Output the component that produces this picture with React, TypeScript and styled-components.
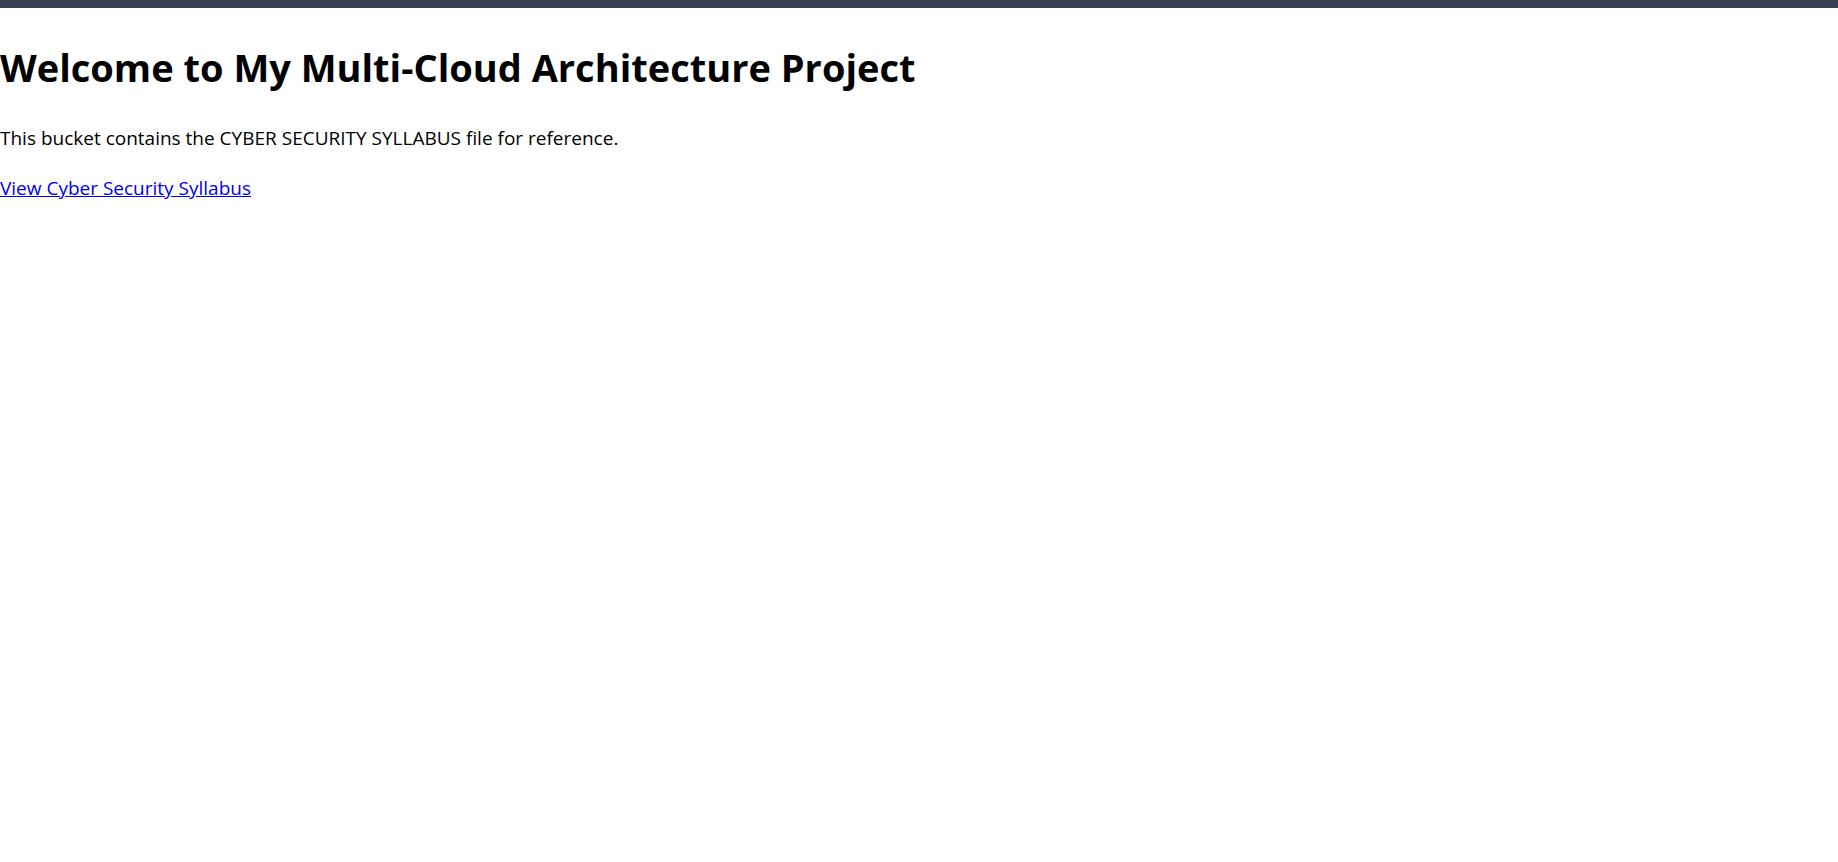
import styled, { createGlobalStyle } from 'styled-components';

const GlobalStyle = createGlobalStyle`
  html, body {
    margin: 0;
    padding: 0;
    background: #ffffff;
  }
  body {
    font-family: 'Open Sans', 'Noto Sans', sans-serif;
    color: #000000;
  }
`;

const TopBar = styled.div`
  height: 8px;
  background-color: #374151;
`;

const Main = styled.main`
  display: flex;
  flex-direction: column;
  align-items: flex-start;
  padding-top: 36px;
`;

const Title = styled.h1`
  margin: 0 0 36px;
  font-size: 38px;
  line-height: 46px;
  font-weight: 700;
`;

const Text = styled.p`
  margin: 0 0 25px;
  font-size: 19px;
  line-height: 25px;
`;

const Link = styled.a`
  font-size: 19px;
  line-height: 25px;
  color: #0000ee;
  text-decoration: underline;
`;

const App: React.FC = () => {
  return (
    <>
      <GlobalStyle />
      <TopBar />
      <Main>
        <Title>Welcome to My Multi-Cloud Architecture Project</Title>
        <Text>This bucket contains the CYBER SECURITY SYLLABUS file for reference.</Text>
        <Link href="#">View Cyber Security Syllabus</Link>
      </Main>
    </>
  );
};

export default App;
